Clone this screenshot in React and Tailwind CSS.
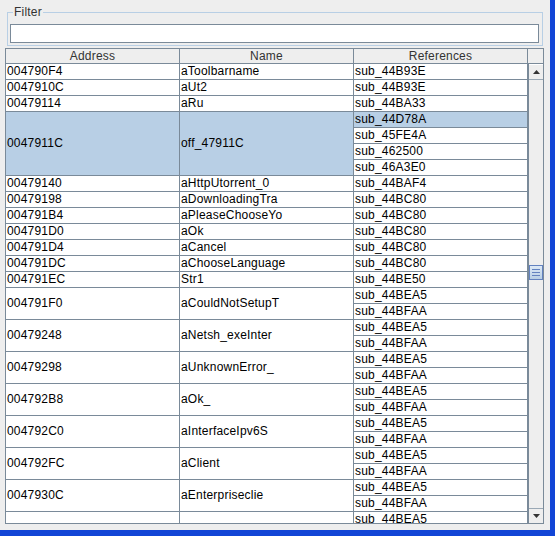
import React from 'react'

const rows = [
  { addr: '004790F4', name: 'aToolbarname', refs: ['sub_44B93E'] },
  { addr: '0047910C', name: 'aUt2', refs: ['sub_44B93E'] },
  { addr: '00479114', name: 'aRu', refs: ['sub_44BA33'] },
  { addr: '0047911C', name: 'off_47911C', refs: ['sub_44D78A', 'sub_45FE4A', 'sub_462500', 'sub_46A3E0'], selected: true },
  { addr: '00479140', name: 'aHttpUtorrent_0', refs: ['sub_44BAF4'] },
  { addr: '00479198', name: 'aDownloadingTra', refs: ['sub_44BC80'] },
  { addr: '004791B4', name: 'aPleaseChooseYo', refs: ['sub_44BC80'] },
  { addr: '004791D0', name: 'aOk', refs: ['sub_44BC80'] },
  { addr: '004791D4', name: 'aCancel', refs: ['sub_44BC80'] },
  { addr: '004791DC', name: 'aChooseLanguage', refs: ['sub_44BC80'] },
  { addr: '004791EC', name: 'Str1', refs: ['sub_44BE50'] },
  { addr: '004791F0', name: 'aCouldNotSetupT', refs: ['sub_44BEA5', 'sub_44BFAA'] },
  { addr: '00479248', name: 'aNetsh_exeInter', refs: ['sub_44BEA5', 'sub_44BFAA'] },
  { addr: '00479298', name: 'aUnknownError_', refs: ['sub_44BEA5', 'sub_44BFAA'] },
  { addr: '004792B8', name: 'aOk_', refs: ['sub_44BEA5', 'sub_44BFAA'] },
  { addr: '004792C0', name: 'aInterfaceIpv6S', refs: ['sub_44BEA5', 'sub_44BFAA'] },
  { addr: '004792FC', name: 'aClient', refs: ['sub_44BEA5', 'sub_44BFAA'] },
  { addr: '0047930C', name: 'aEnterpriseclie', refs: ['sub_44BEA5', 'sub_44BFAA'] },
  { addr: '', name: '', refs: ['sub_44BEA5', 'sub_44BFAA'] },
]

const font = { fontFamily: '"Liberation Sans", Arial, sans-serif' }

const Row = ({ row }) => {
  const bg = row.selected ? 'bg-[#b8cfe5]' : 'bg-white'
  return (
    <div className="flex shrink-0">
      <div className={`w-[174px] shrink-0 flex items-center pl-px border-r border-b border-[#7a8a99] ${bg}`}>
        {row.addr}
      </div>
      <div className={`w-[174px] shrink-0 flex items-center pl-px border-r border-b border-[#7a8a99] ${bg}`}>
        {row.name}
      </div>
      <div className="w-[174px] shrink-0 flex flex-col border-r border-[#7a8a99]">
        {row.refs.map((r, i) => (
          <div
            key={i}
            className={`h-4 pl-px border-b border-[#7a8a99] ${row.selected && i === 0 ? 'bg-[#b8cfe5]' : 'bg-white'}`}
          >
            {r}
          </div>
        ))}
      </div>
    </div>
  )
}

const Arrow = ({ up }) => (
  <svg width="7" height="4" viewBox="0 0 7 4">
    {up ? <path d="M0 4 L3.5 0 L7 4 Z" fill="#333" /> : <path d="M0 0 L7 0 L3.5 4 Z" fill="#333" />}
  </svg>
)

export default function App() {
  return (
    <div
      className="w-[555px] h-[536px] bg-[#eeeeee] border-r-[5px] border-b-[6px] border-[#1245d6] text-[12px] leading-[15px] tracking-[0.2px] text-black overflow-hidden"
      style={font}
    >
      {/* Filter */}
      <fieldset className="mt-[5px] ml-[7px] mr-[7px] border border-[#b8cfe5] pl-[2px] pr-[3px] pb-[2px]">
        <legend className="ml-[3px] px-px leading-[14px] text-[#333]">Filter</legend>
        <input
          type="text"
          className="mt-[5px] block w-full h-[19px] bg-white border border-[#7a8a99] outline-none"
        />
      </fieldset>

      {/* Table */}
      <div className="mt-[2px] ml-[5px] w-[539px] h-[476px] border border-[#7a8a99] flex flex-col bg-white">
        <div className="h-[15px] shrink-0 flex bg-[#eeeeee] border-b border-[#7a8a99] text-[#333] leading-[14px]">
          <div className="w-[174px] text-center border-r border-[#7a8a99]">Address</div>
          <div className="w-[174px] text-center border-r border-[#7a8a99]">Name</div>
          <div className="w-[174px] text-center border-r border-[#7a8a99]">References</div>
          <div className="flex-1" />
        </div>
        <div className="flex flex-1 min-h-0">
          <div className="w-[522px] flex flex-col overflow-hidden">
            {rows.map((r, i) => (
              <Row key={i} row={r} />
            ))}
          </div>
          <div className="flex-1 flex flex-col bg-[#eeeeee] border-l border-[#7a8a99]">
            <div className="h-4 shrink-0 flex items-center justify-center border-b border-[#9aa8b5] border-t border-t-white">
              <Arrow up />
            </div>
            <div className="flex-1 flex flex-col">
              <div className="mt-[185px] h-[15px] border border-[#6382bf] bg-gradient-to-b from-[#dde9f6] to-[#b8cfe5] flex flex-col items-center justify-center gap-[2px]">
                <div className="w-[8px] h-px bg-[#6382bf]" />
                <div className="w-[8px] h-px bg-[#6382bf]" />
                <div className="w-[8px] h-px bg-[#6382bf]" />
              </div>
            </div>
            <div className="h-[15px] shrink-0 flex items-center justify-center border-t border-[#9aa8b5]">
              <Arrow />
            </div>
          </div>
        </div>
      </div>
    </div>
  )
}
